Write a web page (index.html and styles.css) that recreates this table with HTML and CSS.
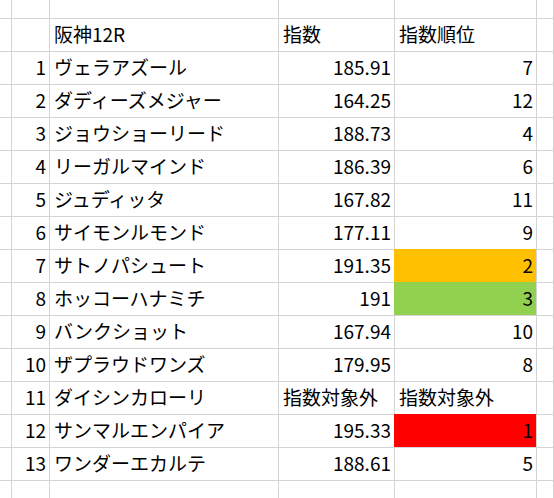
FILE: index.html
```html
<!DOCTYPE html>
<html lang="ja">
<head>
<meta charset="utf-8">
<link rel="stylesheet" href="styles.css">
</head>
<body>
<div class="sheet">
  <div class="c"></div><div class="c"></div><div class="c"></div><div class="c"></div><div class="c"></div><div class="c"></div>

  <div class="c"></div><div class="c"></div><div class="c">阪神12R</div><div class="c">指数</div><div class="c">指数順位</div><div class="c"></div>

  <div class="c"></div><div class="c r">1</div><div class="c">ヴェラアズール</div><div class="c r">185.91</div><div class="c r">7</div><div class="c"></div>
  <div class="c"></div><div class="c r">2</div><div class="c">ダディーズメジャー</div><div class="c r">164.25</div><div class="c r">12</div><div class="c"></div>
  <div class="c"></div><div class="c r">3</div><div class="c">ジョウショーリード</div><div class="c r">188.73</div><div class="c r">4</div><div class="c"></div>
  <div class="c"></div><div class="c r">4</div><div class="c">リーガルマインド</div><div class="c r">186.39</div><div class="c r">6</div><div class="c"></div>
  <div class="c"></div><div class="c r">5</div><div class="c">ジュディッタ</div><div class="c r">167.82</div><div class="c r">11</div><div class="c"></div>
  <div class="c"></div><div class="c r">6</div><div class="c">サイモンルモンド</div><div class="c r">177.11</div><div class="c r">9</div><div class="c"></div>
  <div class="c"></div><div class="c r">7</div><div class="c">サトノパシュート</div><div class="c r">191.35</div><div class="c r fill orange">2</div><div class="c"></div>
  <div class="c"></div><div class="c r">8</div><div class="c">ホッコーハナミチ</div><div class="c r">191</div><div class="c r fill green">3</div><div class="c"></div>
  <div class="c"></div><div class="c r">9</div><div class="c">バンクショット</div><div class="c r">167.94</div><div class="c r">10</div><div class="c"></div>
  <div class="c"></div><div class="c r">10</div><div class="c">ザプラウドワンズ</div><div class="c r">179.95</div><div class="c r">8</div><div class="c"></div>
  <div class="c"></div><div class="c r">11</div><div class="c">ダイシンカローリ</div><div class="c">指数対象外</div><div class="c">指数対象外</div><div class="c"></div>
  <div class="c"></div><div class="c r">12</div><div class="c">サンマルエンパイア</div><div class="c r">195.33</div><div class="c r fill red">1</div><div class="c"></div>
  <div class="c"></div><div class="c r">13</div><div class="c">ワンダーエカルテ</div><div class="c r">188.61</div><div class="c r">5</div><div class="c"></div>

  <div class="c"></div><div class="c"></div><div class="c"></div><div class="c"></div><div class="c"></div><div class="c"></div>
</div>
</body>
</html>
```

FILE: styles.css
```css
html, body {
  margin: 0;
  padding: 0;
  background: #ffffff;
  overflow: hidden;
}
.sheet {
  display: grid;
  grid-template-columns: 12px 38px 229px 116px 142px 1fr;
  grid-template-rows: 19px repeat(14, 33px) 40px;
  width: 554px;
  height: 498px;
  overflow: hidden;
  font-family: "Noto Sans CJK JP", "Noto Sans", sans-serif;
  font-size: 19px;
  color: #000000;
}
.c {
  box-sizing: border-box;
  border-right: 1px solid #d4d4d4;
  border-bottom: 1px solid #d4d4d4;
  display: flex;
  align-items: center;
  padding: 0 3px 4px 4px;
  white-space: nowrap;
  overflow: hidden;
  line-height: 1;
}
.r {
  justify-content: flex-end;
  padding: 0 3px 4px 0;
}
.fill {
  box-shadow: -1px -1px 0 0 var(--fill);
  background: var(--fill);
  overflow: visible;
}
.orange { --fill: #ffc000; }
.green { --fill: #92d050; }
.red { --fill: #ff0000; }
```
